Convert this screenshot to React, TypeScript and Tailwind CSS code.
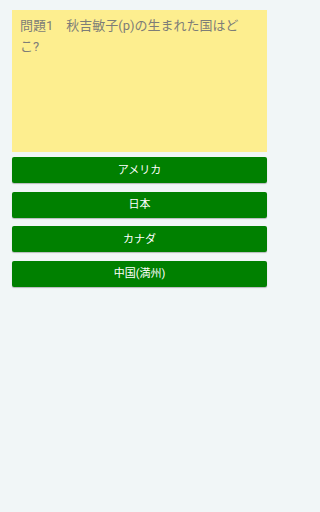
const choices = ['アメリカ', '日本', 'カナダ', '中国(満州)'];

export default function App() {
  return (
    <div className="min-h-[512px] w-full bg-[#f1f6f7]">
      <div
        className="w-[279px] px-3 pt-[10px]"
        style={{ fontFamily: 'Roboto, "Noto Sans CJK JP", sans-serif' }}
      >
        <div className="h-[142px] bg-[#fdee8f] pl-2 pr-6 pt-[5px] text-[13px] leading-[21px] text-[#7d7d78]">
          問題1　秋吉敏子(p)の生まれた国はどこ?
        </div>
        <div className="mt-[5px] flex flex-col gap-[8.5px]">
          {choices.map((c) => (
            <button
              key={c}
              className="flex h-[26px] w-full items-center justify-center rounded-[2px] bg-[#008000] pt-[2px] text-[11px] text-white shadow-[0_1px_1px_rgba(0,0,0,0.25)]"
            >
              {c}
            </button>
          ))}
        </div>
      </div>
    </div>
  );
}
